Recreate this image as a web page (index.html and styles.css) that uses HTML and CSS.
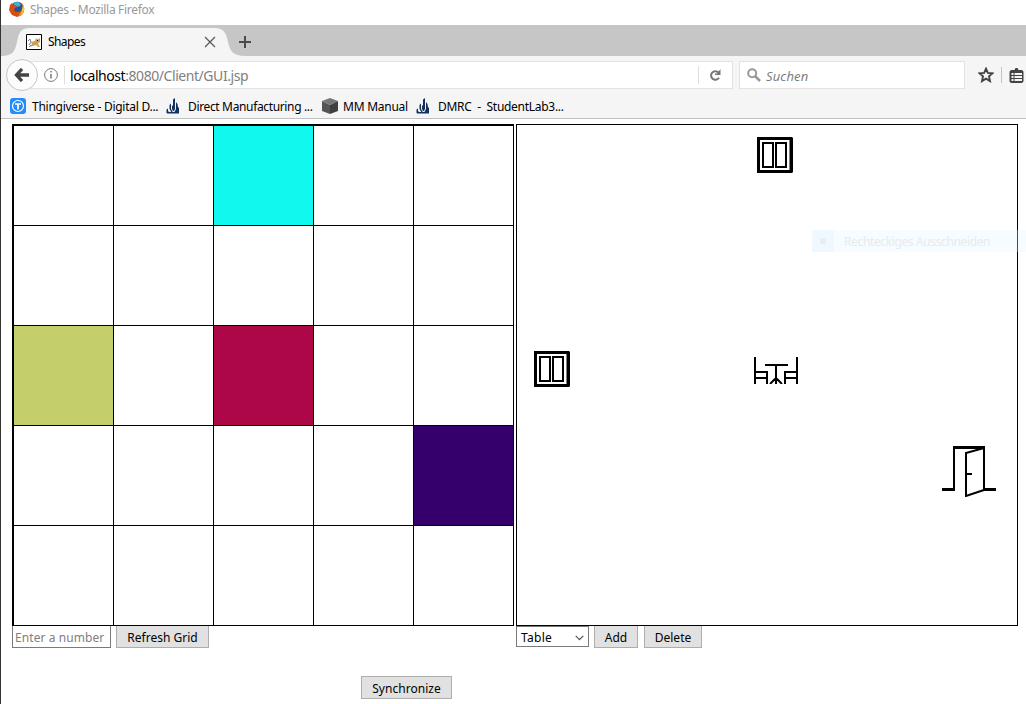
FILE: index.html
```html
<!DOCTYPE html>
<html lang="de">
<head>
<meta charset="utf-8">
<title>Shapes</title>
<link rel="stylesheet" href="styles.css">
</head>
<body>
<svg width="0" height="0" class="defs">
  <symbol id="flame" viewBox="0 0 14 16"><path d="M7 1.500L9 0v11l-1 2H7l-1-2V8l1-1zM3.500 7L5 5.500V11l2 3.500H5.500L3.500 11zM.5 11.500l1.500-1V13l2 2H.5zM10 4l1.500 2 .5 3 1 1v4l-1 1H8l2-4z" fill="#14305f"/><path d="M1 14h12v1.500H1z" fill="#14305f"/></symbol>
  <symbol id="window" viewBox="0 0 36 36"><path d="M1.500 1.500h32.500v33h-32.500z" fill="none" stroke="#000" stroke-width="3"/><path d="M35.500 1v34" stroke="#000"/><path d="M6 6h10v24H6zM19 6h10v24H19z" fill="none" stroke="#000" stroke-width="2"/></symbol>
</svg>
<div class="browser">
  <header class="title-bar">
    <svg class="firefox" width="16" height="16" viewBox="0 0 16 16"><circle cx="8" cy="8" r="7.300" fill="#e36b13"/><circle cx="8.500" cy="6" r="5.200" fill="#24568f"/><path d="M5 1l5 0 2 3-3 2-4-2z" fill="#4daad6"/><path d="M1 4l2-2 0 2 3 0 2 2-3 2 1 3 4 1 3-2 1-4 1 4-2 4-5 2-5-2-3-5z" fill="#d94c12"/><path d="M14 4l1.500 4-2 5-4 2 3-4z" fill="#fcc43c"/></svg>
    <span class="title-text">Shapes - Mozilla Firefox</span>
  </header>
  <div class="tab-strip">
    <svg class="tab-shape" width="250" height="31" viewBox="0 0 250 31"><path d="M0 31C12 31 14 26 16 17C18 7 20 3 29 3H213C223 3 225 8 227 17C229 26 232 31 244 31z" fill="#f5f5f5"/></svg>
    <div class="tab">
      <svg width="16" height="16" viewBox="0 0 16 16"><path d="M.5.5h15v15H.5z" fill="#fff" stroke="#000"/><path d="M5 8l4-1 1-3 1.500 1.500L14 4v4l-2 1.500 2 3.500h-2l-2-2-3 1-4 1 3-3z" fill="#c9a25c"/><path d="M2 7l2-2 1 3-2 3M3 13l2-2" fill="none" stroke="#7d858a"/><path d="M11 6.500h1" stroke="#111"/></svg>
      <span class="tab-text">Shapes</span>
      <svg class="close" width="12" height="12" viewBox="0 0 12 12"><path d="M1 1l10 10M11 1L1 11" stroke="#555" stroke-width="1.200"/></svg>
      <svg class="plus" width="12" height="12" viewBox="0 0 12 12"><path d="M6 0v12M0 6h12" stroke="#4b4b4b" stroke-width="2"/></svg>
    </div>
  </div>
  <div class="nav">
    <div class="back"><svg width="16" height="14" viewBox="0 0 16 14"><path d="M8 1L2.500 7 8 13M3 7h12" fill="none" stroke="#444" stroke-width="3.300"/></svg></div>
    <div class="url">
      <svg class="info" width="14" height="14" viewBox="0 0 14 14"><circle cx="7" cy="7" r="6.400" fill="none" stroke="#777"/><path d="M7 6v4.500M7 3v1.500" stroke="#777" stroke-width="1.500"/></svg>
      <span class="url-text"><b>localhost</b>:8080/Client/GUI.jsp</span>
      <span class="reload"><svg width="12" height="12" viewBox="0 0 12 12"><path d="M9.500 3.500A4.300 4.300 0 1 0 10 8.800" fill="none" stroke="#777" stroke-width="2"/><path d="M11.500 0v6H6V4.500h2z" fill="#777"/></svg></span>
    </div>
    <div class="search"><svg width="14" height="14" viewBox="0 0 14 14"><circle cx="5.200" cy="5.200" r="4" fill="none" stroke="#999" stroke-width="2"/><path d="M8 8l5 5" stroke="#999" stroke-width="2.500"/></svg><i>Suchen</i></div>
    <svg class="star" width="16" height="16" viewBox="0 0 16 16"><path d="M8 1.700l1.800 4.200 4.700.4-3.500 3.100 1 4.700-4-2.500-4 2.500 1-4.700-3.500-3.100 4.700-.4z" fill="none" stroke="#444" stroke-width="1.900"/></svg>
    <span class="rule"></span>
    <svg class="clip" width="15" height="15" viewBox="0 0 15 15"><path d="M4 2h1.500l1-2h2l1 2H13l1.500 1.500v10L13 15H2L.5 13.500v-10L2 2z" fill="#444"/><path d="M2.500 5h2v2h-2zM5.500 5H13v2H5.500zM2.500 8h2v2h-2zM5.500 8H13v2H5.500zM2.500 11h2v2h-2zM5.500 11H13v2H5.500z" fill="#f5f5f5"/></svg>
  </div>
  <div class="bookmarks">
    <svg width="16" height="16" viewBox="0 0 16 16"><rect width="16" height="16" rx="3" fill="#248bfb"/><circle cx="8" cy="8" r="5.500" fill="none" stroke="#fff" stroke-width="1.200"/><path d="M5 6h6M8 6v5.500" stroke="#fff" stroke-width="1.700"/></svg>
    <span class="bm bm-thing">Thingiverse - Digital D...</span>
    <svg width="14" height="16"><use href="#flame"/></svg>
    <span class="bm bm-direct">Direct Manufacturing ...</span>
    <svg width="16" height="16" viewBox="0 0 16 16"><path d="M8 0l8 3-8 4-8-4z" fill="#777"/><path d="M0 3l8 4v9l-8-3z" fill="#555"/><path d="M16 3L8 7v9l8-3z" fill="#404040"/></svg>
    <span class="bm bm-manual">MM Manual</span>
    <svg width="14" height="16"><use href="#flame"/></svg>
    <span class="bm bm-dmrc">DMRC&nbsp; -&nbsp; StudentLab3...</span>
  </div>
  <main class="page">
    <section class="panel">
      <div class="grid">
        <i></i><i></i><i class="cyan"></i><i></i><i></i>
        <i></i><i></i><i></i><i></i><i></i>
        <i class="olive"></i><i></i><i class="crimson"></i><i></i><i></i>
        <i></i><i></i><i></i><i></i><i class="indigo"></i>
        <i></i><i></i><i></i><i></i><i></i>
      </div>
      <div class="controls"><input class="number" placeholder="Enter a number"><button class="refresh">Refresh Grid</button></div>
    </section>
    <section class="panel">
      <div class="canvas">
        <svg class="item window-top" width="36" height="36"><use href="#window"/></svg>
        <svg class="item window-left" width="36" height="36"><use href="#window"/></svg>
        <svg class="item table" width="46" height="28" viewBox="0 0 46 28"><path d="M2 1v27M1 16h13v12M1 22h13M44 1v27M45 16H32v12M45 22H32M12 9h23M23 9v19M23 22l-6 6M23 22l6 6" fill="none" stroke="#000" stroke-width="2"/></svg>
        <svg class="item door" width="54" height="52" viewBox="0 0 54 52"><path d="M0 44.500h13M41 44.500h13" stroke="#000" stroke-width="3"/><path d="M12 45V2h30v43l-18 6V8l18-5M24 29h6" fill="none" stroke="#000" stroke-width="2"/><path d="M11 2.500h32" stroke="#000" stroke-width="3"/></svg>
      </div>
      <div class="controls"><div class="select"><span>Table</span><svg width="9" height="6" viewBox="0 0 9 6"><path d="M.7.8l3.800 3.800L8.300.8" fill="none" stroke="#555" stroke-width="1.200"/></svg></div><button class="add">Add</button><button class="delete">Delete</button></div>
    </section>
  </main>
  <button class="sync">Synchronize</button>
  <div class="ghost"><span class="ghost-mark"></span><span>Rechteckiges Ausschneiden</span></div>
</div>
</body>
</html>
```
FILE: styles.css
```css
* { box-sizing: border-box; }
body { margin: 0; font: 12px "Noto Sans", sans-serif; color: #000; background: #fff; overflow: hidden; }
svg { display: block; flex: none; }
.defs { position: absolute; }
.browser { width: 1026px; height: 704px; border-left: 1px solid #333; position: relative; white-space: nowrap; overflow: hidden; }
.title-bar { height: 25px; display: flex; padding: 1px 0 0 8px; gap: 5px; color: #999; }
.title-text { line-height: 18px; letter-spacing: -.32px; }
.tab-strip { height: 31px; background: #c6c6c6; position: relative; }
.tab-shape { position: absolute; left: 0; top: 0; }
.tab { position: relative; display: flex; align-items: center; height: 31px; padding: 3px 0 0 25px; }
.tab-text { margin-left: 6px; width: 156px; letter-spacing: -.6px; line-height: 16px; padding-bottom: 1px; }
.plus { margin-left: 23px; }
.nav { height: 38px; background: #f5f5f5; display: flex; align-items: center; padding-left: 5px; }
.back { width: 32px; height: 32px; border: 1px solid #c6c6c6; border-radius: 50%; background: #fcfcfc; display: grid; place-items: center; position: relative; z-index: 1; flex: none; }
.url { width: 711px; height: 28px; margin-left: -16px; border: 1px solid #e2e2e2; background: #fff; display: flex; align-items: center; padding-left: 21px; flex: none; }
.url-text { margin-left: 6px; padding-left: 5px; border-left: 1px solid #ddd; height: 18px; line-height: 19px; font-size: 14px; color: #808080; letter-spacing: -.44px; }
.url-text b { font-weight: 400; color: #000; }
.reload { margin-left: auto; width: 34px; height: 18px; border-left: 1px solid #ddd; display: flex; align-items: center; padding-left: 10px; }
.search { width: 226px; height: 28px; margin-left: 6px; border: 1px solid #e2e2e2; background: #fff; display: flex; align-items: center; gap: 5px; padding-left: 7px; flex: none; }
.search i { font: italic 13px/18px "Open Sans", sans-serif; letter-spacing: .15px; color: #777; margin-top: 2px; }
.star { margin-left: 13px; }
.rule { width: 1px; height: 16px; background: #c4c4c4; margin: 0 7px 0 7px; flex: none; }
.bookmarks { height: 25px; background: #f5f5f5; border-bottom: 1px solid #c0c0c0; display: flex; align-items: center; padding: 0 0 0 9px; }
.bm { line-height: 16px; padding-top: 2px; flex: none; }
.bm-thing { width: 134px; margin-left: 6px; letter-spacing: -.26px; }
.bm-direct { width: 126px; margin: 0 8px; letter-spacing: -.35px; }
.bm-manual { width: 68px; margin: 0 5px; letter-spacing: -.25px; }
.bm-dmrc { margin-left: 8px; letter-spacing: -.28px; }
.page { display: flex; gap: 2px; padding: 5px 0 0 11px; }
.panel { width: 502px; }
.grid { width: 502px; height: 502px; border: 1px solid #000; border-right: 0; border-bottom: 0; padding: 1px 0 0 1px; display: grid; grid-template-columns: repeat(5, 100px); grid-template-rows: repeat(5, 100px); box-shadow: inset 1px 1px #000; }
.grid i { border: solid #000; border-width: 0 1px 1px 0; }
.cyan { background: #11f9ee; }
.olive { background: #c4ce6b; }
.crimson { background: #ad0748; }
.indigo { background: #35006b; }
.canvas { height: 502px; border: 1px solid #000; position: relative; }
.item { position: absolute; }
.window-top { left: 240px; top: 12px; }
.window-left { left: 17px; top: 226px; }
.table { left: 236px; top: 231px; }
.door { left: 425px; top: 320px; }
.controls { display: flex; align-items: flex-start; height: 22px; }
button { font: 12px "Noto Sans", sans-serif; background: #e1e1e1; border: 1px solid #adadad; border-radius: 0; padding: 2px 0 0; height: 22px; line-height: 19px; color: #000; }
.controls button { border-top: 0; }
.number { font: 12px/18px "Noto Sans", sans-serif; width: 99px; height: 22px; border: 1px solid #7a7a7a; border-top: 0; padding: 2px 2px 1px; margin: 0 5px 0 0; border-radius: 0; letter-spacing: .07px; }
.number::placeholder { color: #808080; opacity: 1; }
.refresh { width: 93px; }
.select { width: 73px; height: 21px; border: 1px solid #7a7a7a; display: flex; align-items: center; justify-content: space-between; padding: 2px 4px 0; letter-spacing: .3px; }
.add { width: 44px; margin-left: 5px; }
.delete { width: 58px; margin-left: 6px; }
.sync { display: block; width: 91px; height: 23px; margin: 28px 0 0 360px; letter-spacing: .05px; }
.ghost { position: absolute; left: 811px; top: 230px; width: 215px; height: 22px; background: rgba(225, 245, 255, .3); color: #e9ebed; display: flex; align-items: center; gap: 10px; letter-spacing: -.37px; }
.ghost-mark { width: 22px; height: 22px; background: #f0f8ff; display: grid; place-items: center; }
.ghost-mark::after { content: ""; width: 6px; height: 6px; border-radius: 50%; background: #e9ebed; }
```
